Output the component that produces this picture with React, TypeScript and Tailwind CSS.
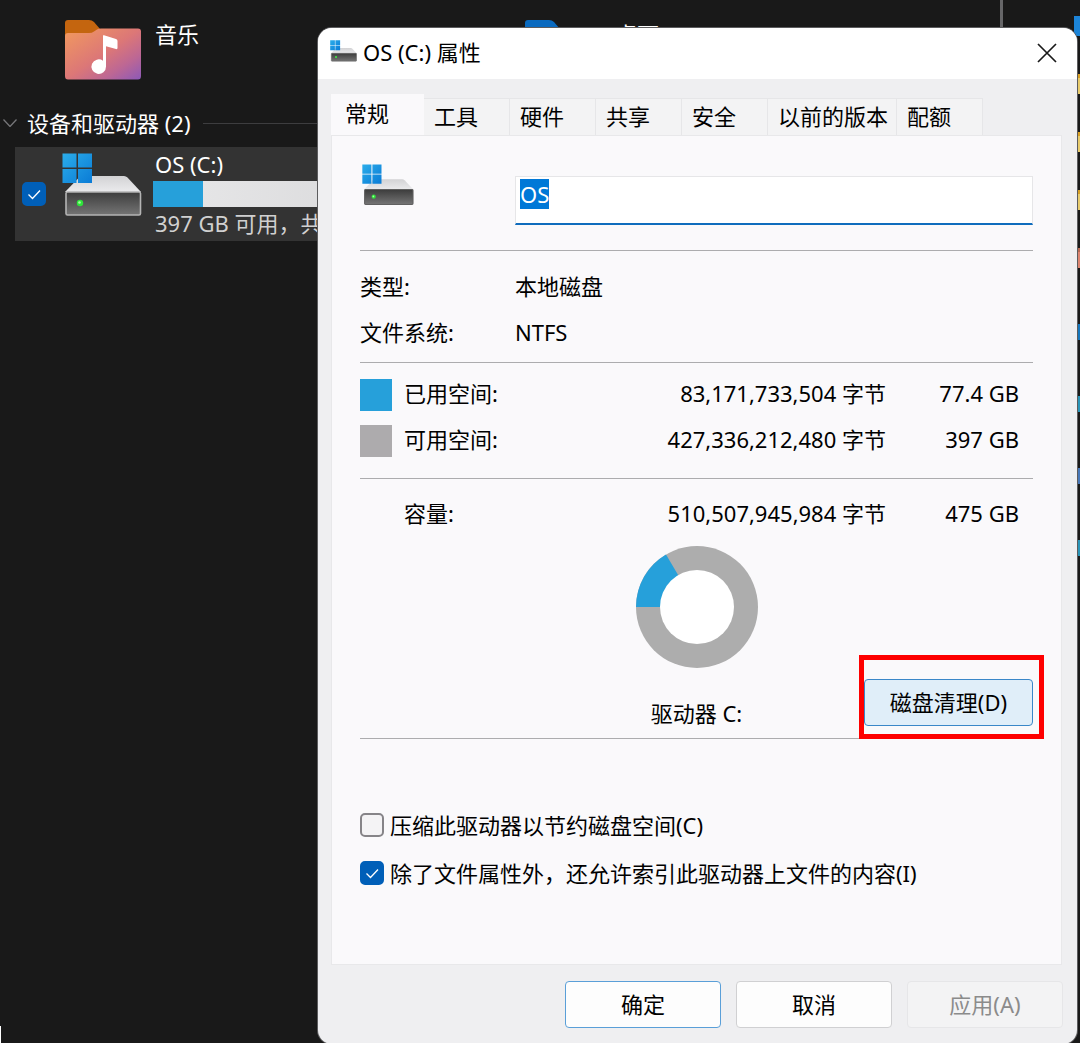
import { useEffect, useId, useRef, useState } from 'react'
import type { ReactNode } from 'react'

const TABS = ['常规', '工具', '硬件', '共享', '安全', '以前的版本', '配额']

const SPACE_ROWS = [
  { label: '已用空间:', bytes: '83,171,733,504', size: '77.4 GB', swatch: 'bg-[#26a0da]' },
  { label: '可用空间:', bytes: '427,336,212,480', size: '397 GB', swatch: 'bg-[#adabad]' },
]

const SIDE_ITEMS = [
  'border-[#1c84d8] bg-[#1c84d8]',
  'border-[#d9a024] bg-[#e8cb6c]',
  'border-[#d9a024] bg-[#e8cb6c]',
  'border-[#d9a024] bg-[#e8cb6c]',
  'border-[#b96a52] bg-[#dd8570]',
]

const SIDE_ITEMS_LOWER = [
  'bg-[#1677bd]',
  'bg-[#2a95b8]',
  'bg-[#4878b8]',
  'bg-[#2a95b8]',
]

const DriveIcon = ({ className, flat }: { className: string; flat?: boolean }) => {
  const id = useId()

  return (
    <svg viewBox="0 0 80 64" className={className} aria-hidden="true">
      <defs>
        <linearGradient id={`${id}top`} x1="0" y1="0" x2="0" y2="1">
          <stop offset="0" stopColor="#d2d2d4" />
          <stop offset="1" stopColor="#ebebed" />
        </linearGradient>
        <linearGradient id={`${id}body`} x1="0" y1="0" x2="0" y2="1">
          <stop offset="0" stopColor="#3c3c3c" />
          <stop offset="1" stopColor="#757575" />
        </linearGradient>
        <linearGradient id={`${id}logo`} x1="0" y1="0" x2="1" y2="1">
          <stop offset="0" stopColor="#2badea" />
          <stop offset="1" stopColor="#0a7bd6" />
        </linearGradient>
      </defs>
      <path d="M20 23H62Q64 23 65.500 24.500L79 39H3L17 24.500Z" fill={`url(#${id}top)`} />
      <rect
        x="4"
        y="39"
        width="74.500"
        height="23"
        rx="1.500"
        fill={`url(#${id}body)`}
        stroke={flat ? '#606060' : '#b4b4b4'}
        strokeWidth="1.600"
      />
      <circle cx="18" cy="50" r="3.200" fill="#2ee23a" />
      <circle cx="17.500" cy="49.500" r="1.300" fill="#a6ff9e" />
      <path
        d="M.5.5H14.500V14.500H.5ZM16 .5H30V14.500H16ZM.5 16H14.500V30H.5ZM16 16H30V30H16Z"
        fill={`url(#${id}logo)`}
      />
    </svg>
  )
}

const MusicFolderIcon = () => (
  <svg viewBox="0 0 76 60" className="h-15 w-[76px] shrink-0" aria-hidden="true">
    <defs>
      <linearGradient id="music-front" x1="0" y1="0" x2="1" y2="1">
        <stop offset="0" stopColor="#f29a5e" />
        <stop offset="0.5" stopColor="#dc7777" />
        <stop offset="0.75" stopColor="#bd6794" />
        <stop offset="1" stopColor="#8c59b8" />
      </linearGradient>
    </defs>
    <path d="M0 20V3Q0 0 3 0H24Q27 0 29 2L35 9V20Z" fill="#c4650f" />
    <path
      d="M0 16Q0 13 3 13H24Q27 13 29 11.500L32 9.500Q33 8.500 36 8.500H73Q76 8.500 76 11.500V56Q76 59.500 73 59.500H3Q0 59.500 0 56Z"
      fill="url(#music-front)"
    />
    <path
      d="M38 15.500Q38 15 39 15.300L51 19Q52.500 19.500 52.500 21V28Q52.500 29.500 51 29L41 26.200V46.500A7.300 7.300 0 1 1 38 40.800Z"
      fill="#fff"
    />
  </svg>
)

const DesktopFolderIcon = () => (
  <svg viewBox="0 0 76 60" className="h-15 w-[76px] shrink-0" aria-hidden="true">
    <path d="M0 20V3Q0 0 3 0H24Q27 0 29 2L35 9V20Z" fill="#0a6abf" />
    <path d="M0 13H24L32 8.500H73Q76 8.500 76 11.500V59.500H0Z" fill="#2591e0" />
  </svg>
)

const CheckBox = ({
  checked,
  onChange,
  label,
  children,
}: {
  checked: boolean
  onChange: (checked: boolean) => void
  label?: string
  children?: ReactNode
}) => (
  <label className="flex items-center gap-1.5">
    <span className="grid size-6 shrink-0">
      <input
        type="checkbox"
        aria-label={label}
        checked={checked}
        onChange={(e) => onChange(e.target.checked)}
        className="peer col-start-1 row-start-1 size-6 appearance-none rounded-[5px] border-2 border-[#868488] bg-[#f4f3f5] checked:border-[#005fb8] checked:bg-[#005fb8]"
      />
      <svg
        viewBox="0 0 24 24"
        className="pointer-events-none invisible col-start-1 row-start-1 peer-checked:visible"
        fill="none"
        stroke="#fff"
        strokeWidth="1.300"
        aria-hidden="true"
      >
        <path d="M6.500 12.500 10.500 16.500 18 8.500" />
      </svg>
    </span>
    {children}
  </label>
)

const Explorer = () => {
  const [selected, setSelected] = useState(true)

  return (
    <div className="flex flex-1">
      <main className="flex-1 overflow-hidden pt-5 text-white">
        <div className="flex leading-7">
          <div className="flex w-[460px] shrink-0 gap-3.5 pl-[65px]">
            <MusicFolderIcon />
            <span>音乐</span>
          </div>
          <div className="flex shrink-0 gap-3.5 pl-[65px]">
            <DesktopFolderIcon />
            <span>桌面</span>
          </div>
        </div>

        <h2 className="mt-[27px] flex items-center gap-3 pl-[3px] leading-8">
          <svg viewBox="0 0 14 8" className="-mr-0.5 h-2 w-3.5" fill="none" stroke="#77777a" strokeWidth="1.300">
            <path d="M.5.5 7 7.500 13.500.5" />
          </svg>
          设备和驱动器 (2)
          <span className="h-px flex-1 bg-[#3d3d3f]" />
        </h2>

        <div className="mt-2 ml-[15px] flex h-[94px] w-[460px] bg-[#333]">
          <div className="flex items-center pl-[7px]">
            <CheckBox label="OS (C:)" checked={selected} onChange={setSelected} />
          </div>
          <DriveIcon className="mt-1.5 ml-4 h-16 w-20 shrink-0" />
          <div className="ml-[11px] flex-1 pt-1">
            <div className="mb-1 pl-0.5 leading-[26px]">OS (C:)</div>
            <div className="h-[26px] bg-linear-to-r from-[#e8e8e9] to-[#d4d4d6]">
              <div className="h-full w-[50px] bg-[#26a0da]" />
            </div>
            <div className="pl-0.5 leading-8 text-[#d0d0d0]">397 GB 可用，共 475 GB</div>
          </div>
        </div>
      </main>

      <aside className="flex w-20 shrink-0 flex-col items-end border-l-[3px] border-[#666668] pt-4">
        <ul className="flex flex-col gap-[38px]">
          {SIDE_ITEMS.map((color, i) => (
            <li key={i} className={`h-5 w-1.5 border-t-4 ${color}`} />
          ))}
        </ul>
        <ul className="mt-14 flex flex-col gap-14">
          {SIDE_ITEMS_LOWER.map((color, i) => (
            <li key={i} className={`h-4 w-1.5 ${color}`} />
          ))}
        </ul>
      </aside>
    </div>
  )
}

const UsageChart = () => (
  <svg viewBox="0 0 122 122" className="size-[122px]" role="img" aria-label="驱动器 C:">
    <circle cx="61" cy="61" r="61" fill="#adadad" />
    <path d="M61 61H0A61 61 0 0 1 30 8.500Z" fill="#26a0da" />
    <circle cx="61" cy="61" r="37" fill="#fff" />
  </svg>
)

const GeneralPanel = () => {
  const nameRef = useRef<HTMLInputElement>(null)
  const [compress, setCompress] = useState(false)
  const [index, setIndex] = useState(true)

  // The label starts out selected so it can be typed over
  useEffect(() => {
    nameRef.current?.focus()
    nameRef.current?.select()
  }, [])

  return (
    <div role="tabpanel" className="border border-[#e8e8ea] bg-[#faf9fb] px-7 pb-[67px]">
      <div className="flex border-b border-[#acacae] pt-7 pb-[25px]">
        <div className="w-[155px] shrink-0">
          <DriveIcon flat className="ml-0.5 h-[42px] w-[52px]" />
        </div>
        <input
          ref={nameRef}
          type="text"
          aria-label="名称"
          defaultValue="OS"
          className="mt-3 h-[49px] min-w-0 flex-1 border border-b-2 border-[#e6e6e8] border-b-[#0f6cbd] bg-white pb-3 pl-1 leading-[28px] outline-none selection:bg-[#0078d7] selection:text-white"
        />
      </div>

      <dl className="grid grid-cols-[155px_1fr] border-b border-[#acacae] pt-3 pb-[7px] leading-[46px]">
        <dt>类型:</dt>
        <dd>本地磁盘</dd>
        <dt>文件系统:</dt>
        <dd>NTFS</dd>
      </dl>

      <table className="mt-[7px] w-full leading-[46px]">
        <tbody>
          {SPACE_ROWS.map((row) => (
            <tr key={row.label}>
              <td className="w-11 pt-1">
                <div className={`size-8 ${row.swatch}`} />
              </td>
              <th className="text-left font-normal">{row.label}</th>
              <td className="text-right">{row.bytes} 字节</td>
              <td className="w-[147px] pr-3.5 text-right">{row.size}</td>
            </tr>
          ))}
        </tbody>
        <tbody className="before:block before:h-4">
          <tr className="border-t border-[#acacae]">
            <td />
            <th className="pt-[11px] text-left font-normal">容量:</th>
            <td className="pt-[11px] text-right">510,507,945,984 字节</td>
            <td className="pt-[11px] pr-3.5 text-right">475 GB</td>
          </tr>
        </tbody>
      </table>

      <div className="grid grid-cols-[1fr_auto_1fr] items-end border-b border-[#acacae] pt-2.5 pb-0.5">
        <div className="col-start-2 flex flex-col items-center">
          <UsageChart />
          <div className="mt-[22px] leading-[46px]">驱动器 C:</div>
        </div>
        <div className="relative mb-2.5 w-[169px] justify-self-end">
          <button
            type="button"
            className="h-[47px] w-full rounded border border-[#3a87c8] bg-[#e0eef9]"
          >
            磁盘清理(D)
          </button>
          <span className="pointer-events-none absolute -top-6 -right-[11px] -bottom-[13px] -left-[5px] border-5 border-[#fe0000]" />
        </div>
      </div>

      <div className="mt-[62px] flex flex-col leading-[48px]">
        <CheckBox checked={compress} onChange={setCompress}>
          压缩此驱动器以节约磁盘空间(C)
        </CheckBox>
        <CheckBox checked={index} onChange={setIndex}>
          除了文件属性外，还允许索引此驱动器上文件的内容(I)
        </CheckBox>
      </div>
    </div>
  )
}

const PropertiesDialog = () => {
  const [tab, setTab] = useState(TABS[0])

  return (
    <div
      role="dialog"
      aria-label="OS (C:) 属性"
      className="absolute top-7 right-[3px] left-[318px] overflow-hidden rounded-[14px] bg-[#efeff1] text-black shadow-[0_0_0_1px_#5c5c5e]"
    >
      <header className="flex h-[51px] items-center bg-white pr-5 pb-0.5 pl-3">
        <DriveIcon flat className="mb-1 h-[22px] w-[27px]" />
        <h1 className="ml-1.5 flex-1">OS (C:) 属性</h1>
        <button type="button" aria-label="关闭">
          <svg viewBox="0 0 20 20" className="size-5" fill="none" stroke="#1a1a1a" strokeWidth="1.700">
            <path d="M1 1 19 19M19 1 1 19" />
          </svg>
        </button>
      </header>

      <div className="pt-[15px] pr-[15px] pl-[13px]">
        <div role="tablist" className="flex items-end">
          {TABS.map((name) => (
            <button
              key={name}
              type="button"
              role="tab"
              aria-selected={name === tab}
              onClick={() => setTab(name)}
              className={
                name === tab
                  ? 'h-[41px] min-w-[93px] bg-[#faf9fb] pr-2 pb-0.5 pl-3.5 text-left'
                  : 'h-[37px] min-w-[86px] border-t border-r border-[#e6e6e8] bg-[#f3f3f4] pr-2 pb-0.5 pl-2.5 text-left'
              }
            >
              {name}
            </button>
          ))}
        </div>
        <GeneralPanel />
      </div>

      <footer className="flex justify-end gap-[15px] pt-4 pr-3.5 pb-4">
        <button type="button" className="h-[47px] w-[156px] rounded border border-[#5a9fd8] bg-[#fdfdfd]">
          确定
        </button>
        <button type="button" className="h-[47px] w-[156px] rounded border border-[#d0d0d2] bg-[#fdfdfd]">
          取消
        </button>
        <button
          type="button"
          disabled
          className="h-[47px] w-[156px] rounded border border-[#e6e6e8] bg-[#f3f3f4] text-[#8b8b8b]"
        >
          应用(A)
        </button>
      </footer>
    </div>
  )
}

export default function App() {
  return (
    <div
      lang="zh-CN"
      className="relative flex min-h-screen overflow-hidden bg-[#191919] font-['Noto_Sans','Noto_Sans_CJK_SC',sans-serif] text-[22px]"
    >
      <Explorer />
      <PropertiesDialog />
      <span className="absolute bottom-0 left-0 h-[17px] w-px bg-white" />
    </div>
  )
}
